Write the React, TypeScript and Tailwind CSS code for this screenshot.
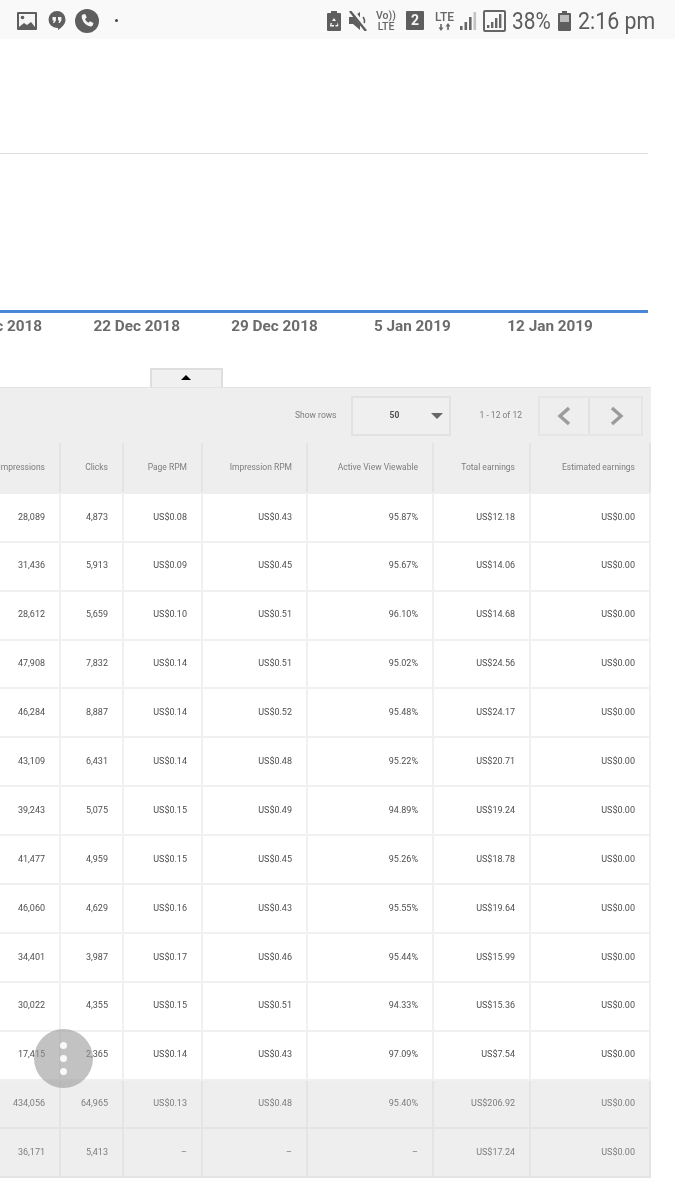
import React from "react";

const widths = ["w-[61px]", "w-[63px]", "w-[79px]", "w-[105px]", "w-[126px]", "w-[97px]", "w-[120px]"];
const headers = ["Impressions", "Clicks", "Page RPM", "Impression RPM", "Active View Viewable", "Total earnings", "Estimated earnings"];
const rows = [
  ["28,089", "4,873", "US$0.08", "US$0.43", "95.87%", "US$12.18", "US$0.00"],
  ["31,436", "5,913", "US$0.09", "US$0.45", "95.67%", "US$14.06", "US$0.00"],
  ["28,612", "5,659", "US$0.10", "US$0.51", "96.10%", "US$14.68", "US$0.00"],
  ["47,908", "7,832", "US$0.14", "US$0.51", "95.02%", "US$24.56", "US$0.00"],
  ["46,284", "8,887", "US$0.14", "US$0.52", "95.48%", "US$24.17", "US$0.00"],
  ["43,109", "6,431", "US$0.14", "US$0.48", "95.22%", "US$20.71", "US$0.00"],
  ["39,243", "5,075", "US$0.15", "US$0.49", "94.89%", "US$19.24", "US$0.00"],
  ["41,477", "4,959", "US$0.15", "US$0.45", "95.26%", "US$18.78", "US$0.00"],
  ["46,060", "4,629", "US$0.16", "US$0.43", "95.55%", "US$19.64", "US$0.00"],
  ["34,401", "3,987", "US$0.17", "US$0.46", "95.44%", "US$15.99", "US$0.00"],
  ["30,022", "4,355", "US$0.15", "US$0.51", "94.33%", "US$15.36", "US$0.00"],
  ["17,415", "2,365", "US$0.14", "US$0.43", "97.09%", "US$7.54", "US$0.00"],
];
const totals = [
  ["434,056", "64,965", "US$0.13", "US$0.48", "95.40%", "US$206.92", "US$0.00"],
  ["36,171", "5,413", "–", "–", "–", "US$17.24", "US$0.00"],
];

function Row({ cells, kind }: { cells: string[]; kind: "head" | "body" | "total" }) {
  const rowCls =
    kind === "head"
      ? "h-[50.9px] pb-[2px] bg-[#eeeeee] text-[#7d7d7d] text-[8.5px]"
      : kind === "body"
      ? "h-[48.9px] bg-white text-[#4f4f4f] border-b-2 border-[#f0f0f0]"
      : "h-[48.9px] bg-[#eeeeee] text-[#7d7d7d] border-b-2 border-[#e4e4e4]";
  const cellBorder = kind === "body" ? "border-[#f0f0f0]" : "border-[#e4e4e4]";
  return (
    <div className={`flex ${rowCls}`}>
      {cells.map((c, i) => (
        <div key={i} className={`${widths[i]} shrink-0 flex items-center justify-end pr-[14px] border-r-2 ${cellBorder} whitespace-nowrap`}>
          {c}
        </div>
      ))}
    </div>
  );
}

function Signal() {
  return (
    <svg width="18" height="18" viewBox="0 0 18 18" className="mr-[5px]">
      <rect x="0" y="14" width="2.6" height="4" fill="#666666" />
      <rect x="4.500" y="10" width="2.6" height="8" fill="#666666" />
      <rect x="9" y="5" width="2.6" height="13" fill="#666666" />
      <rect x="13.500" y="0" width="2.6" height="18" fill="#c4c4c4" />
    </svg>
  );
}

function BoxSignal() {
  return (
    <div className="w-[23px] h-[22px] mr-[6px] border-2 border-[#666666] rounded-[2px] flex items-center justify-center">
      <svg width="15" height="14" viewBox="0 0 15 14" fill="#666666">
        <rect x="0" y="11" width="2.4" height="3" />
        <rect x="4" y="8" width="2.4" height="6" />
        <rect x="8" y="4" width="2.4" height="10" />
        <rect x="12" y="0" width="2.4" height="14" />
      </svg>
    </div>
  );
}

function StatusBar() {
  return (
    <div className="h-[39px] bg-[#f9f9f9] flex items-center pt-[2px] pl-[17px] text-[#5c5c5c]">
      <svg width="20" height="18" viewBox="0 0 20 18" className="mr-[11px]">
        <rect width="20" height="18" rx="1" fill="#5e5e5e" />
        <path d="M2 2h16v13l-4-5-4 3-3-2-5 4z" fill="#f5f5f5" />
        <circle cx="5.500" cy="5.500" r="1.800" fill="#5e5e5e" />
      </svg>
      <svg width="18" height="20" viewBox="0 0 18 20" className="mr-[9px]">
        <path d="M9 0a8.500 8.500 0 0 1 8.500 8.500c0 4.600-3.600 8-7.500 10.500v-2.200A8.400 8.400 0 0 1 9 17 8.500 8.500 0 0 1 9 0z" fill="#5e5e5e" />
        <path d="M4.500 6h3.400v3.400L6.300 12H5l.9-2.600H4.500zM10 6h3.400v3.400L11.800 12h-1.300l.9-2.600H10z" fill="#f5f5f5" />
      </svg>
      <svg width="24" height="24" viewBox="0 0 24 24" className="mr-[16px]">
        <circle cx="12" cy="12" r="12" fill="#5e5e5e" />
        <path d="M8 5.500l2.200-.5 1.500 3.600-1.600 1.400c.6 1.700 1.700 2.900 3.400 3.800l1.500-1.500 3.400 1.600-.5 2.200c-.3 1-1.200 1.400-2.200 1.300C10.800 16.800 6.800 12 6.700 7.500 6.700 6.500 7.100 5.800 8 5.500z" fill="#f5f5f5" />
      </svg>
      <div className="w-[3px] h-[3px] rounded-full bg-[#444444]" />
      <div className="flex-1" />
      <svg width="14" height="20" viewBox="0 0 14 20" className="mr-[8px]">
        <path d="M4 0h6v2h3a1 1 0 0 1 1 1v16a1 1 0 0 1-1 1H1a1 1 0 0 1-1-1V3a1 1 0 0 1 1-1h3z" fill="#5e5e5e" />
        <path d="M7 7l2 3H5zM3.500 12l1.500 0-.5 2h2.500v1.500H3zM10.500 11.500l1 3-1 1H8.500V14h1.500z" fill="#f5f5f5" />
      </svg>
      <svg width="20" height="20" viewBox="0 0 20 20" className="mr-[7px]">
        <path d="M0 6h4l7-5v18l-7-6H0z" fill="#5e5e5e" />
        <path d="M3 0l15 19" stroke="#f9f9f9" strokeWidth="4.500" />
        <path d="M1 0l16 20" stroke="#5e5e5e" strokeWidth="2.400" />
        <path d="M14 6q2.500 3.500 1 6" stroke="#5e5e5e" strokeWidth="1.600" fill="none" />
      </svg>
      <div className="w-[20px] mr-[10px] flex flex-col items-center font-['Roboto'] font-medium text-[10.5px] leading-[11px] text-[#666666]">
        <span className="whitespace-nowrap">Vo))</span>
        <span>LTE</span>
      </div>
      <div className="w-[18px] h-[19px] mr-[10px] bg-[#5e5e5e] rounded-[1px] flex items-center justify-center font-['Roboto'] font-bold text-[14px] text-[#f5f5f5]">
        2
      </div>
      <div className="w-[21px] mr-[5px] flex flex-col items-center font-['Roboto'] font-medium text-[12px] leading-[12px] text-[#666666]">
        <span>LTE</span>
        <svg width="14" height="8" viewBox="0 0 14 8" fill="#666666">
          <path d="M3 8L.5 4.500h1.700V1h1.600v3.500h1.700zM10 0l2.500 3.500h-1.700V7H9.200V3.500H7.500z" />
        </svg>
      </div>
      <Signal />
      <BoxSignal />
      <span className="w-[39px] mr-[7px] origin-left scale-x-[0.87] font-['Roboto'] text-[24px] leading-none text-[#5c5c5c] whitespace-nowrap">38%</span>
      <svg width="13" height="20" viewBox="0 0 13 20" className="mr-[7px]">
        <path d="M4 0h5v2h3a1 1 0 0 1 1 1v16a1 1 0 0 1-1 1H1a1 1 0 0 1-1-1V3a1 1 0 0 1 1-1h3z" fill="#5e5e5e" />
        <rect x="2" y="4" width="9" height="7" fill="#bdbdbd" />
      </svg>
      <span className="w-[77px] mr-[20px] origin-left scale-x-[0.89] font-['Roboto'] text-[24px] leading-none text-[#5c5c5c] whitespace-nowrap">2:16 pm</span>
    </div>
  );
}

export default function App() {
  return (
    <div className="relative w-[675px] h-[1200px] overflow-hidden bg-white font-['Roboto',sans-serif] text-[9px] blur-[0.35px]">
      <StatusBar />
      {/* chart */}
      <div className="w-[648px] h-[274px] flex flex-col pt-[114px]">
        <div className="h-[1px] shrink-0 bg-[#dcdcdc]" />
        <div className="h-[156px] shrink-0" />
        <div className="h-[3px] shrink-0 bg-[#4a86d8]" />
      </div>
      <div className="flex ml-[-70px] h-[29px] pt-[1px] text-[15.3px] font-bold leading-[24px] text-[#6b6b6b] whitespace-nowrap">
        {["15 Dec 2018", "22 Dec 2018", "29 Dec 2018", "5 Jan 2019", "12 Jan 2019"].map((d) => (
          <div key={d} className="w-[137.8px] shrink-0 text-center">{d}</div>
        ))}
      </div>
      {/* tab */}
      <div className="mt-[26px] ml-[150px] w-[73px] h-[19px] bg-[#f0f0f0] border-2 border-b-0 border-[#dedede] flex justify-center pt-[5px] pr-[1px]">
        <div className="w-0 h-0 border-l-[5px] border-r-[5px] border-b-[5px] border-l-transparent border-r-transparent border-b-black" />
      </div>
      {/* toolbar */}
      <div className="w-[651px] h-[56px] bg-[#eeeeee] border-t border-[#e3e3e3] flex items-center justify-end text-[#7d7d7d] text-[8.5px]">
        <span className="mr-[14px]">Show rows</span>
        <div className="relative w-[100px] h-[40px] border-2 border-[#e2e2e2] bg-[#efefef] flex items-center mr-[29px]">
          <span className="ml-[37px] font-bold text-[#4f4f4f]">50</span>
          <div className="absolute right-[6px] top-[15px] w-0 h-0 border-l-[6px] border-r-[6px] border-t-[6px] border-l-transparent border-r-transparent border-t-[#666666]" />
        </div>
        <span className="mr-[16px]">1 - 12 of 12</span>
        <div className="flex h-[40px] w-[105px] border-2 border-[#e6e6e6] mr-[8px]">
          <div className="flex-1 flex items-center justify-center border-r-2 border-[#e2e2e2]">
            <svg width="14" height="20" viewBox="0 0 14 20" fill="none" stroke="#9c9c9c" strokeWidth="3.4"><path d="M12 2L3 10l9 8" /></svg>
          </div>
          <div className="flex-1 flex items-center justify-center pl-[3px]">
            <svg width="14" height="20" viewBox="0 0 14 20" fill="none" stroke="#9c9c9c" strokeWidth="3.4"><path d="M2 2l9 8-9 8" /></svg>
          </div>
        </div>
      </div>
      {/* table */}
      <div className="w-[651px]">
        <Row cells={headers} kind="head" />
        {rows.map((r, i) => <Row key={i} cells={r} kind="body" />)}
        {totals.map((r, i) => <Row key={i} cells={r} kind="total" />)}
      </div>
      {/* floating button */}
      <div className="absolute left-[34px] top-[1029px] w-[59px] h-[59px] rounded-full bg-[#9a9a9a]/60 flex flex-col items-center justify-center gap-[6px]">
        <div className="w-[7px] h-[7px] rounded-full bg-white/90" />
        <div className="w-[7px] h-[7px] rounded-full bg-white/90" />
        <div className="w-[7px] h-[7px] rounded-full bg-white/90" />
      </div>
    </div>
  );
}
